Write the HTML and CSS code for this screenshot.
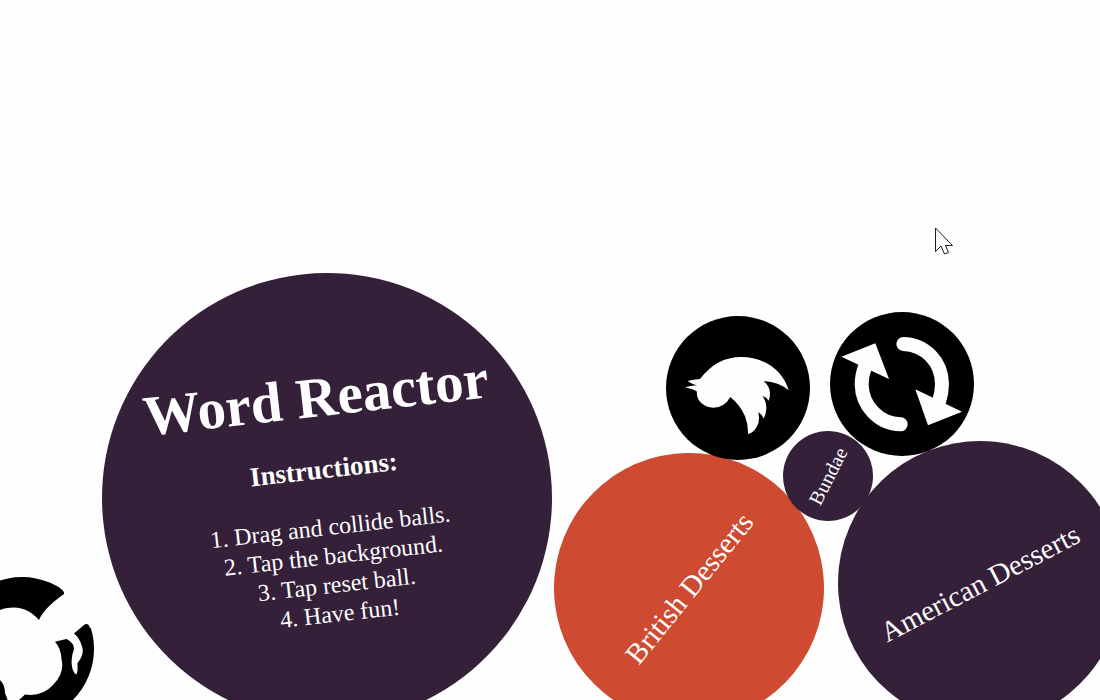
FILE: index.html
```html
<!DOCTYPE html>
<html lang="en">
<head>
<meta charset="utf-8">
<meta name="viewport" content="width=device-width, initial-scale=1">
<title>Word Reactor</title>
<link rel="stylesheet" href="styles.css">
</head>
<body>
<main class="stage">
  <section class="ball intro">
    <h1 class="intro-title">Word Reactor</h1>
    <h2 class="intro-heading">Instructions:</h2>
    <ol class="intro-steps">
      <li>1. Drag and collide balls.</li>
      <li>2. Tap the background.</li>
      <li>3. Tap reset ball.</li>
      <li>4. Have fun!</li>
    </ol>
  </section>

  <button type="button" class="ball word british"><span class="label">British Desserts</span></button>
  <button type="button" class="ball word american"><span class="label">American Desserts</span></button>
  <button type="button" class="ball word bundae"><span class="label">Bundae</span></button>

  <a class="ball icon github" href="#github" aria-label="GitHub">
    <svg class="glyph" viewBox="0 0 144 144" aria-hidden="true">
      <circle cx="72" cy="72" r="72" fill="#000"/>
      <path fill="#fefefe" d="M108 -4L110 11Q115 15 114 17Q94 31 89 43C80 33 68 27 50 33L30 40V100L50 103Q55 108 55 116L58 124V145H66L68 124L75 117.500Q92 120 103 108Q115 96 111.500 82Q111 71 105 64.700Q111 63 116.700 62Q124 66 124 72Q121 80 121.700 87Q122 94 126 97.500Q128 97 127.500 86Q134 78 132.500 71Q130 61 124 56.500L134 48Q138 45 140 51L152 48V-4Z"/>
    </svg>
  </a>
  <a class="ball icon twitter" href="#twitter" aria-label="Twitter">
    <svg class="glyph" viewBox="33 34 432 432" aria-hidden="true">
      <circle cx="249" cy="250" r="216" fill="#000"/>
      <path fill="#fefefe" d="M135 223Q185 157 258 157C330 157 385 200 401 257Q372 232 326 229Q344 245 345 265Q345 280 341 288Q335 278 322 273Q335 290 334 312Q333 330 326 342Q322 330 310 322Q316 350 305 367Q294 385 279 388Q280 360 270 335Q255 300 226 277Q208 309 175 309C145 309 122 285 126 261Q115 253 90 248Q105 243 126 242Q115 240 98 229Q115 225 135 223Z"/>
    </svg>
  </a>
  <button type="button" class="ball icon reset" aria-label="Reset">
    <svg class="glyph" viewBox="29 35 432 432" aria-hidden="true">
      <circle cx="245" cy="251" r="216" fill="#000"/>
      <g fill="none" stroke="#fefefe" stroke-width="42" stroke-linecap="round">
        <path d="M249 131C315 133 364 185 365 250Q365 277 356 304"/>
        <path d="M241 372C175 370 125 316 124 252Q124 225 134 199"/>
      </g>
      <path fill="#fefefe" d="M285 267L425 334L323 375ZM165 129L63 169L206 236Z"/>
    </svg>
  </button>

  <svg class="cursor" viewBox="0 0 20 28" aria-hidden="true">
    <path d="M.5 1V24.500L6 19L9.500 27L13.500 25.500L10.500 18.500H17.500Z" fill="#fff" stroke="#1a1a22" stroke-width="1"/>
  </svg>
</main>
</body>
</html>
```
FILE: styles.css
```css
body {
  margin: 0;
  background: #fefefe;
  color: #fefefe;
  font-family: Georgia, "Liberation Serif", serif;
}

.stage {
  position: relative;
  min-height: 100vh;
  overflow: hidden;
}

.ball {
  position: absolute;
  box-sizing: border-box;
  margin: 0;
  padding: 0;
  border: 0;
  border-radius: 50%;
  aspect-ratio: 1;
  background: #352039;
  color: inherit;
  font-family: inherit;
  cursor: pointer;
}

.intro {
  left: 102px;
  top: 273px;
  width: 450px;
  padding-top: 92px;
  text-align: center;
  transform: rotate(-6.4deg);
}

.intro-title {
  margin: 0 0 24px;
  font-size: 57px;
  line-height: 64px;
}

.intro-heading {
  margin: 0 0 28px;
  font-size: 27px;
  line-height: 32px;
}

.intro-steps {
  margin: 0;
  padding: 0;
  list-style: none;
  font-size: 24px;
  line-height: 29px;
}

.word {
  display: flex;
  align-items: center;
  justify-content: center;
  font-size: 29px;
}

.label {
  white-space: nowrap;
}

.british {
  left: 554px;
  top: 453px;
  width: 270px;
  background: #ce4a31;
  transform: rotate(-51deg);
}

.american {
  left: 838px;
  top: 441px;
  width: 284px;
  transform: rotate(-27.5deg);
}

.bundae {
  left: 783px;
  top: 431px;
  width: 90px;
  font-size: 20px;
  transform: rotate(-63deg);
}

.icon {
  width: 144px;
  background: none;
}

.glyph {
  display: block;
  width: 100%;
  height: 100%;
}

.github {
  left: -50px;
  top: 577px;
}

.twitter {
  left: 666px;
  top: 316px;
}

.reset {
  left: 830px;
  top: 312px;
}

.cursor {
  position: absolute;
  left: 935px;
  top: 227px;
  width: 20px;
  height: 28px;
  pointer-events: none;
}
```
